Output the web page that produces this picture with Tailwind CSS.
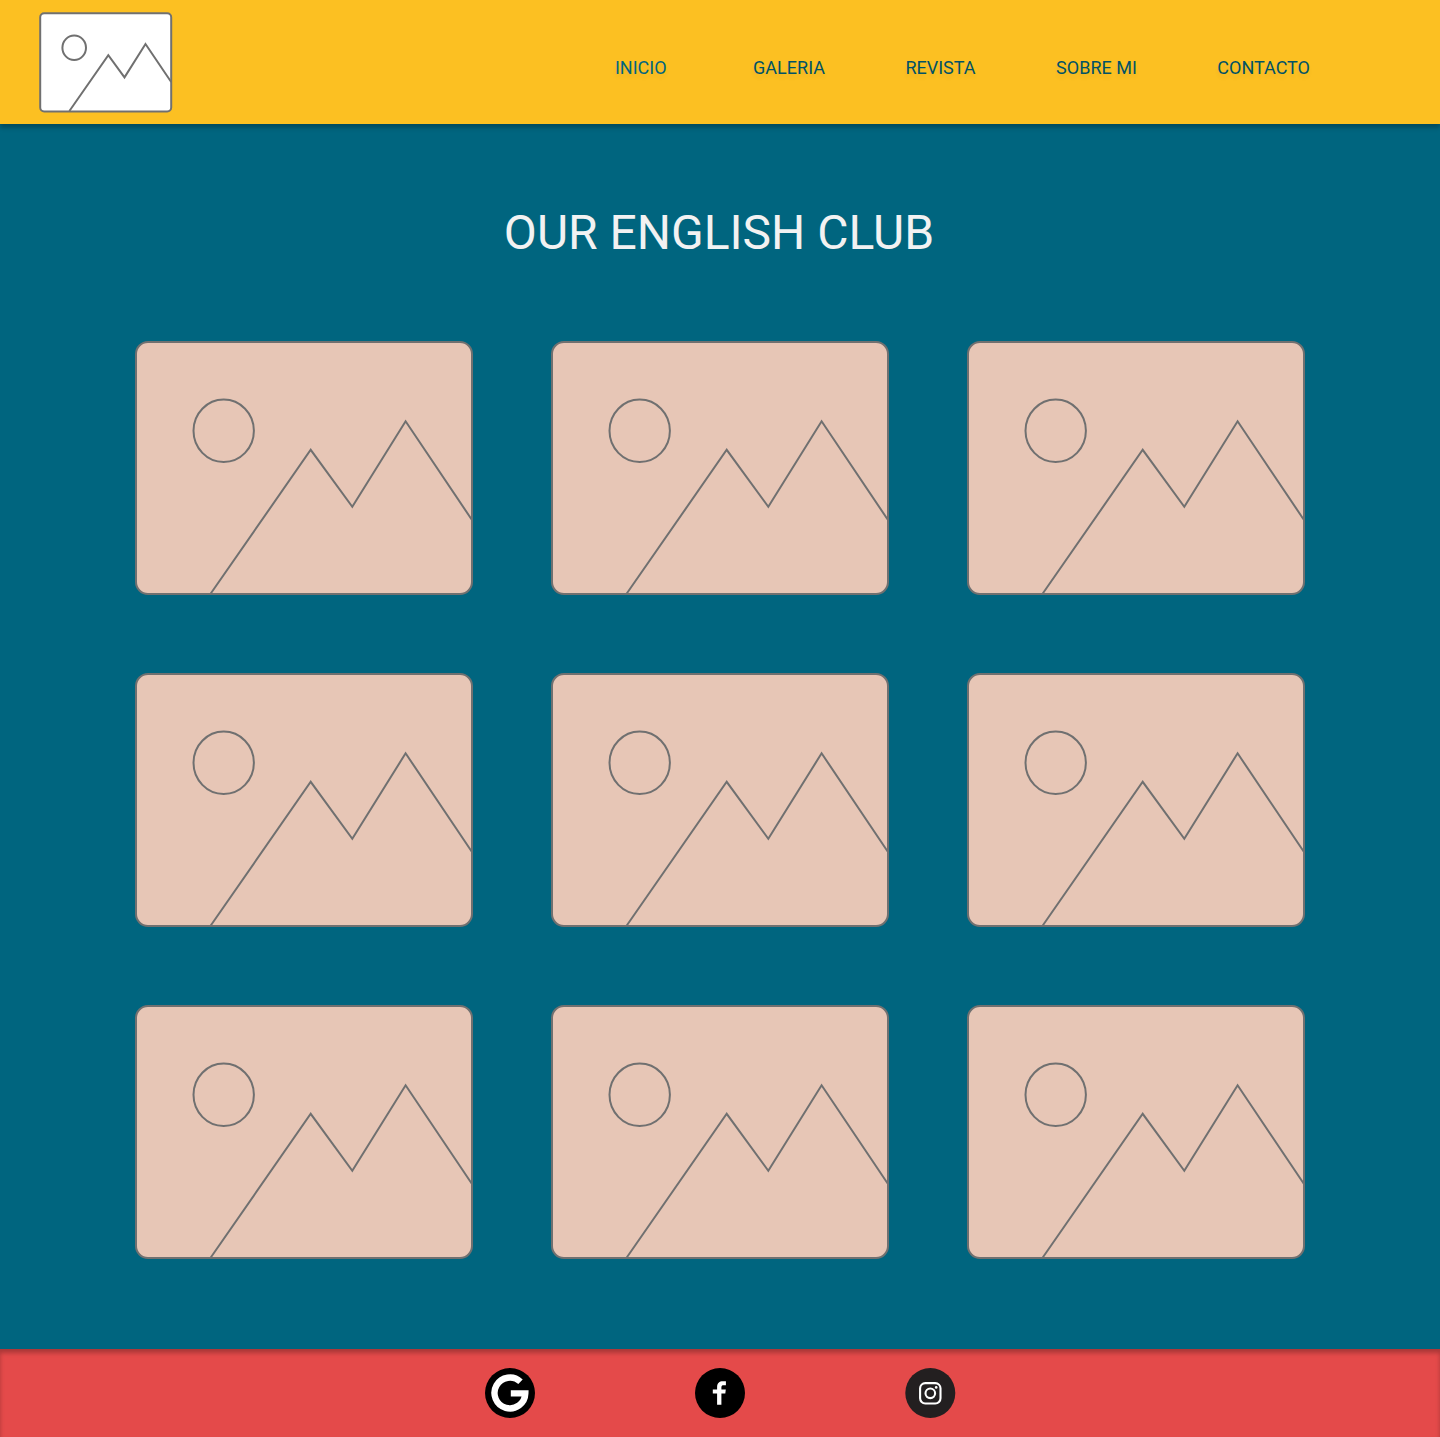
<!DOCTYPE html>
<html lang="es">
<head>
<meta charset="utf-8">
<title>Our English Club</title>
<script src="https://cdn.jsdelivr.net/npm/@tailwindcss/browser@4"></script>
</head>
<body class="min-h-screen flex flex-col bg-[#00657f] font-['Roboto',sans-serif]">
<svg class="hidden">
  <symbol id="photo" viewBox="0 0 336 252" overflow="visible">
    <rect width="336" height="252" rx="12" fill="#e7c6b6" stroke="#707070" stroke-width="2"/>
    <ellipse cx="87.7" cy="88.8" rx="30.2" ry="31.2" fill="none" stroke="#707070" stroke-width="2"/>
    <path d="M74.4 252 174.7 107.8 216.3 164.8 269.6 79.3 336 178" fill="none" stroke="#707070" stroke-width="2"/>
  </symbol>
</svg>
<header class="h-[124px] shrink-0 flex items-center justify-between bg-[#fcc022] pl-10 pr-[130px] shadow-[0_4px_4px_rgba(0,0,0,0.25)]">
  <svg class="w-[131px] h-[98px] overflow-visible" viewBox="0 0 131 98">
    <rect x="0.2" y="0.2" width="131" height="98.2" rx="4" fill="#fff" stroke="#707070" stroke-width="2"/>
    <ellipse cx="34.2" cy="34.7" rx="11.8" ry="12.2" fill="none" stroke="#707070" stroke-width="2"/>
    <path d="M29.4 98 68.3 42.2 84.5 64.4 105.5 31 131.2 69" fill="none" stroke="#707070" stroke-width="2"/>
  </svg>
  <nav class="flex gap-[80.5px] pt-2.5 text-[18px] leading-[21px] text-[#005266] text-shadow-[0_4px_4px_rgba(0,0,0,0.06)]">
    <a class="mr-1.5 text-[#00657f]">INICIO</a>
    <a>GALERIA</a>
    <a>REVISTA</a>
    <a>SOBRE MI</a>
    <a>CONTACTO</a>
  </nav>
</header>
<main class="grow px-[136px] pt-[81px]">
  <h1 class="pr-0.5 text-center text-[48px] leading-[56px] text-[#f2f2f2]">OUR ENGLISH CLUB</h1>
  <div class="mt-[81px] grid grid-cols-3 gap-20">
    <svg class="w-[336px] h-[252px] overflow-visible"><use href="#photo" width="336" height="252"/></svg>
    <svg class="w-[336px] h-[252px] overflow-visible"><use href="#photo" width="336" height="252"/></svg>
    <svg class="w-[336px] h-[252px] overflow-visible"><use href="#photo" width="336" height="252"/></svg>
    <svg class="w-[336px] h-[252px] overflow-visible"><use href="#photo" width="336" height="252"/></svg>
    <svg class="w-[336px] h-[252px] overflow-visible"><use href="#photo" width="336" height="252"/></svg>
    <svg class="w-[336px] h-[252px] overflow-visible"><use href="#photo" width="336" height="252"/></svg>
    <svg class="w-[336px] h-[252px] overflow-visible"><use href="#photo" width="336" height="252"/></svg>
    <svg class="w-[336px] h-[252px] overflow-visible"><use href="#photo" width="336" height="252"/></svg>
    <svg class="w-[336px] h-[252px] overflow-visible"><use href="#photo" width="336" height="252"/></svg>
  </div>
</main>
<footer class="h-[88px] shrink-0 flex items-center justify-center gap-40 bg-[#e44a4a] shadow-[inset_0_4px_4px_rgba(0,0,0,0.25)]">
  <svg class="w-[50px] h-[50px]" viewBox="0 0 50 50">
    <circle cx="25" cy="25" r="25"/>
    <path d="M35.5 13.8A15.4 15.4 0 1 0 40.3 25.4H25.8" fill="none" stroke="#fff" stroke-width="6.4"/>
  </svg>
  <svg class="w-[50px] h-[50px]" viewBox="0 0 50 50">
    <circle cx="25" cy="25" r="25"/>
    <path d="M22.1 36.8V25.6H17.8V21.6H22.1V19.2C22.1 15.2 24.3 13.3 28 13.3H30.9V17.2H28.7C27 17.2 26.4 17.8 26.4 19.4V21.6H30.8L30.3 25.6H26.4V36.8Z" fill="#fff"/>
  </svg>
  <svg class="w-[50px] h-[50px] overflow-visible" viewBox="0 0 50 50">
    <circle cx="25.3" cy="25" r="25" fill="#231f20"/>
    <rect x="15.1" y="15.1" width="20.4" height="20.4" rx="5.2" fill="none" stroke="#fff" stroke-width="2.1"/>
    <circle cx="25.3" cy="25.3" r="4.8" fill="none" stroke="#fff" stroke-width="2.1"/>
    <circle cx="31.2" cy="19.4" r="1.3" fill="#fff"/>
  </svg>
</footer>
</body>
</html>
